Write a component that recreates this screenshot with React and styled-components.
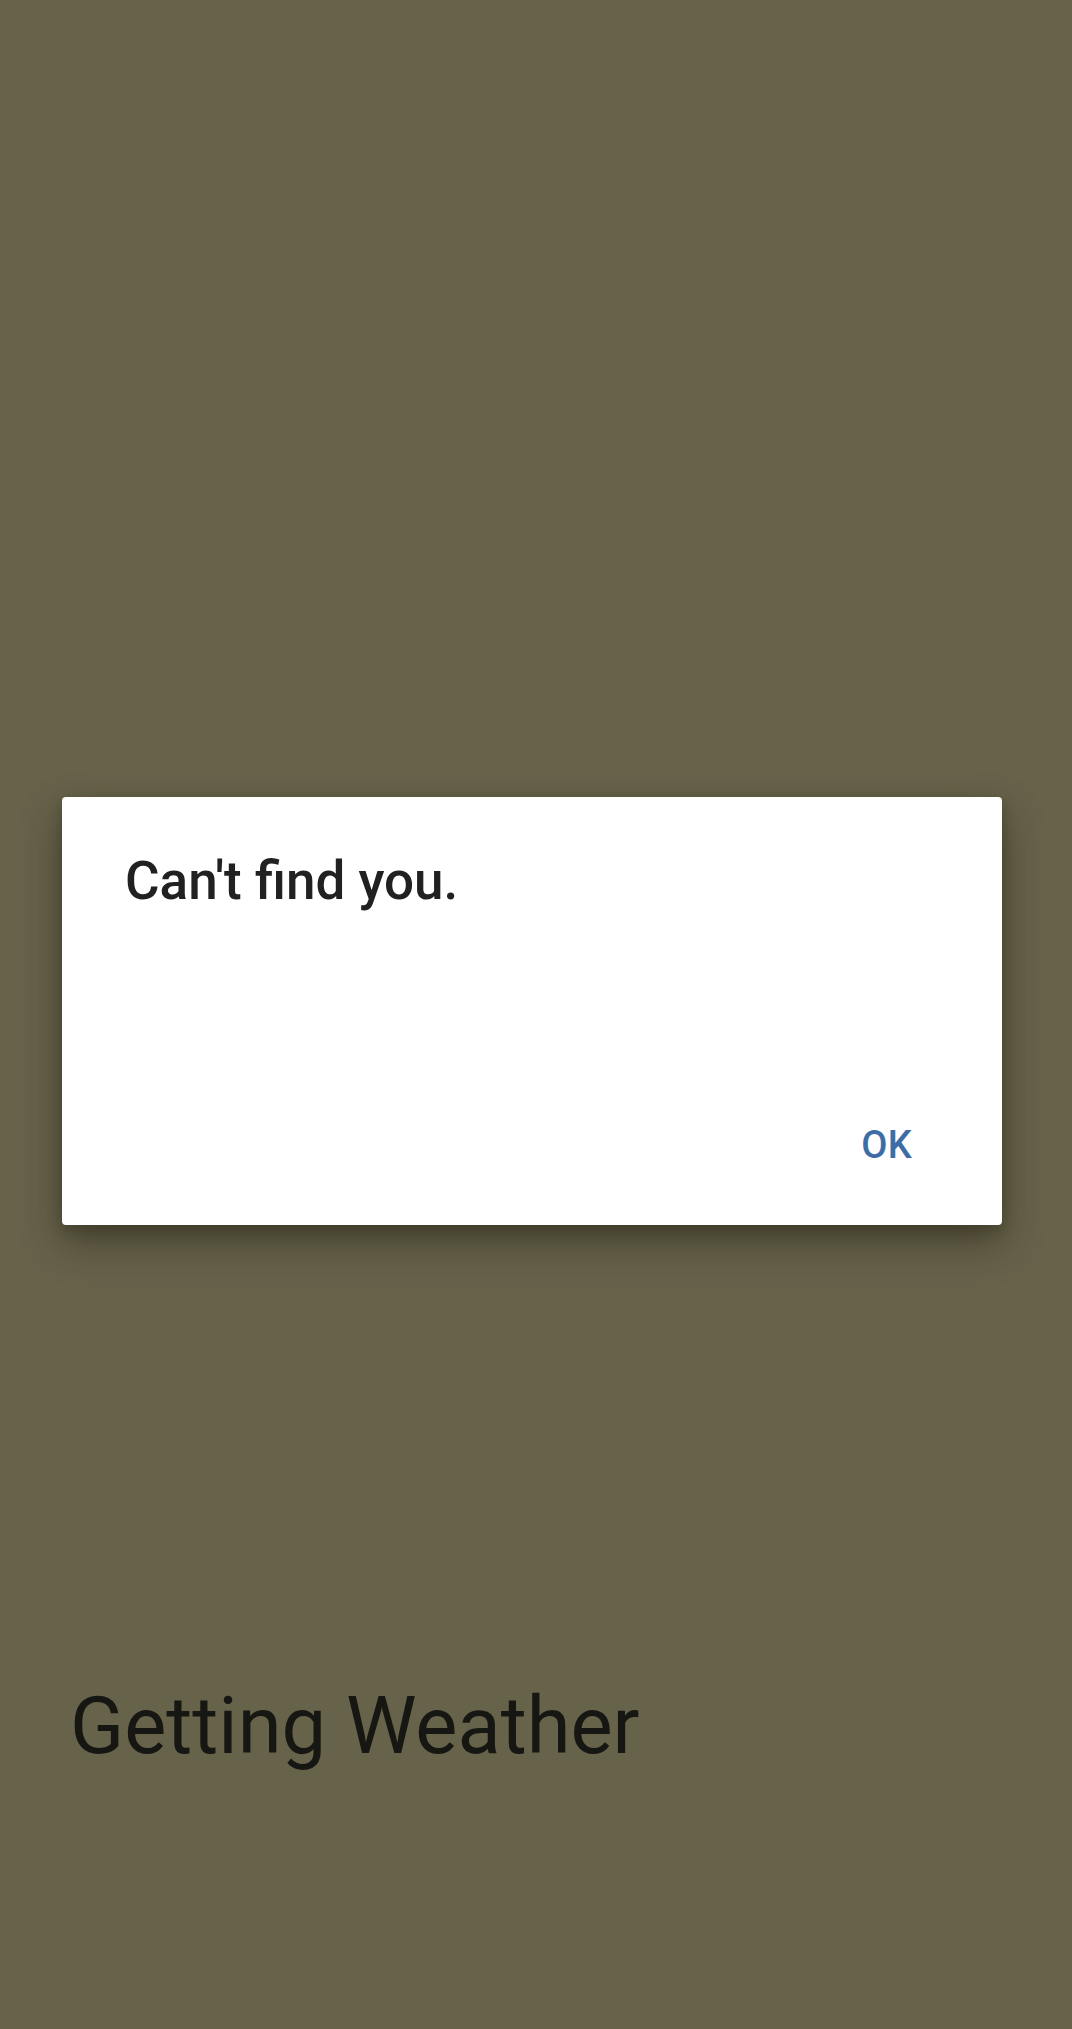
import React from "react";
import styled, { createGlobalStyle } from "styled-components";

const Global = createGlobalStyle`
  html, body {
    margin: 0;
    padding: 0;
    background: #67624a;
    font-family: Roboto, "Noto Sans", "Liberation Sans", sans-serif;
  }
  * { box-sizing: border-box; }
`;

const Screen = styled.div`
  position: relative;
  width: 1072px;
  height: 2029px;
  background: #67624a;
  overflow: hidden;
`;

const Content = styled.main`
  display: flex;
  flex-direction: column;
  padding: 1679px 0 0 70px;
`;

const Heading = styled.h1`
  margin: 0;
  font-size: 79.5px;
  line-height: 94px;
  font-weight: 400;
  color: #161612;
  letter-spacing: 0;
`;

const Dialog = styled.div`
  position: absolute;
  left: 62px;
  top: 797px;
  width: 940px;
  height: 428px;
  background: #ffffff;
  border-radius: 4px;
  box-shadow: 0 18px 40px rgba(30, 28, 15, 0.45), 0 6px 14px rgba(30, 28, 15, 0.25);
  display: flex;
  flex-direction: column;
`;

const Title = styled.h2`
  margin: 0;
  padding: 53px 0 0 63px;
  font-size: 53px;
  line-height: 62px;
  font-weight: 500;
  color: #212121;
`;

const Actions = styled.div`
  margin-top: auto;
  display: flex;
  justify-content: flex-end;
  padding: 0 90px 58px 0;
`;

const TextButton = styled.button`
  border: none;
  background: none;
  padding: 0;
  font-family: inherit;
  font-size: 38px;
  line-height: 44px;
  font-weight: 500;
  color: #3e6da5;
  letter-spacing: 0.3px;
  cursor: pointer;
`;

export default function App() {
  return (
    <Screen>
      <Global />
      <Content>
        <Heading>Getting Weather</Heading>
      </Content>
      <Dialog role="dialog">
        <Title>Can't find you.</Title>
        <Actions>
          <TextButton>OK</TextButton>
        </Actions>
      </Dialog>
    </Screen>
  );
}
